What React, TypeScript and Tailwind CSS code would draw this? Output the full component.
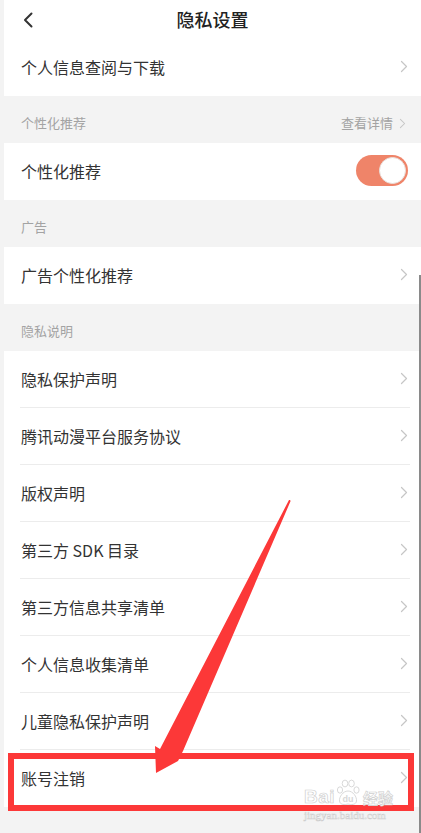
import React from "react";

const font = { fontFamily: '"Noto Sans CJK SC", "Noto Sans", sans-serif' };

function Chevron({ small = false }: { small?: boolean }) {
  return (
    <svg width={small ? 7 : 8} height={small ? 11 : 13} viewBox="0 0 8 13" fill="none">
      <path d="M1.5 1.5 L6.5 6.5 L1.5 11.5" stroke="#c6c6c6" strokeWidth="1.2" strokeLinecap="round" strokeLinejoin="round" />
    </svg>
  );
}

function Row({ label, divider = true, right }: { label: string; divider?: boolean; right?: React.ReactNode }) {
  return (
    <div className="relative h-[57px] flex items-center justify-between pl-[17px] pr-[13px] pb-[2px] bg-white">
      <span className="text-[16px] text-[#333333] leading-none">{label}</span>
      {right ?? <Chevron />}
      {divider && <div className="absolute bottom-0 left-[16px] right-[11px] h-px bg-[#ececec]" />}
    </div>
  );
}

function Section({ label, right }: { label: string; right?: React.ReactNode }) {
  return (
    <div className="h-[47px] pt-[18px] pl-[17px] pr-[15px] flex justify-between items-start">
      <span className="text-[13px] leading-[18px] text-[#a3a3a3]">{label}</span>
      {right}
    </div>
  );
}

export default function App() {
  const privacy = [
    "隐私保护声明",
    "腾讯动漫平台服务协议",
    "版权声明",
    "第三方 SDK 目录",
    "第三方信息共享清单",
    "个人信息收集清单",
    "儿童隐私保护声明",
    "账号注销",
  ];
  const wmStroke = { WebkitTextStroke: "0.7px #cfcfcf" } as React.CSSProperties;
  return (
    <div className="relative w-[421px] h-[833px] overflow-hidden bg-[#f3f3f3]" style={font}>
      <div className="ml-[4px]">
        {/* header */}
        <div className="relative h-[39px] bg-white flex items-center justify-center">
          <svg className="absolute left-[18px] top-[12px]" width="12" height="16" viewBox="0 0 12 16" fill="none">
            <path d="M9.5 1.5 L3 8 L9.5 14.5" stroke="#333" strokeWidth="2" strokeLinecap="round" strokeLinejoin="round" />
          </svg>
          <span className="text-[18px] font-medium text-[#222] leading-none -mt-[1px]">隐私设置</span>
        </div>
        <Row label="个人信息查阅与下载" divider={false} />
        <Section
          label="个性化推荐"
          right={
            <span className="flex items-center gap-[6px] text-[13px] leading-[18px] text-[#a3a3a3]">
              查看详情
              <Chevron small />
            </span>
          }
        />
        <Row
          label="个性化推荐"
          divider={false}
          right={
            <div className="w-[52px] h-[31px] rounded-full bg-[#ef8469] flex items-center justify-end pr-[2px]">
              <div className="w-[27px] h-[27px] rounded-full bg-white border border-[#e8e0dc]" />
            </div>
          }
        />
        <Section label="广告" />
        <Row label="广告个性化推荐" divider={false} />
        <Section label="隐私说明" />
        {privacy.map((p, i) => (
          <Row key={p} label={p} divider={i < privacy.length - 1} />
        ))}
      </div>

      {/* scrollbar */}
      <div className="absolute left-[419px] top-[275px] w-[1.5px] h-[560px] bg-[#8a8a8a]" />

      {/* red box */}
      <div className="absolute left-[8px] top-[753px] w-[406px] h-[58px] border-[6px] border-[#fc3838]" />

      {/* arrow */}
      <svg className="absolute left-0 top-0 pointer-events-none" width="421" height="833" viewBox="0 0 421 833">
        <polygon
          points="290,500 290.6,501 183,751 178,761 156,773 155,746 160,749 289,500"
          fill="#fc3838"
        />
      </svg>

      {/* watermark */}
      <div className="absolute left-[304px] top-[779px] flex flex-col pointer-events-none">
        <div className="flex items-end h-[27px]">
          <span
            className="text-[19px] leading-none font-bold text-white tracking-[0.5px]"
            style={{ fontFamily: '"Liberation Sans", sans-serif', ...wmStroke }}
          >
            Bai
          </span>
          <svg width="24" height="27" viewBox="0 0 24 27" className="mx-[1px]">
            <g fill="white" stroke="#cfcfcf" strokeWidth="0.8">
              <ellipse cx="4" cy="11" rx="2.6" ry="3.2" />
              <ellipse cx="9" cy="4.5" rx="2.8" ry="3.4" />
              <ellipse cx="15.5" cy="4.5" rx="2.8" ry="3.4" />
              <ellipse cx="20.5" cy="11" rx="2.6" ry="3.2" />
              <path d="M12 12 C7 12 3 18 3.5 22 C4 26 9 26 12 25 C15 26 20 26 20.5 22 C21 18 17 12 12 12 Z" />
            </g>
            <text x="12" y="23" textAnchor="middle" fontSize="9" fontWeight="700" fill="#d8d8d8" fontFamily="Liberation Sans, sans-serif">
              du
            </text>
          </svg>
          <span className="text-[15px] leading-none font-bold text-white ml-[2px] mb-[1px]" style={wmStroke}>
            经验
          </span>
        </div>
        <span
          className="text-[11px] text-white leading-none mt-[4px]"
          style={{ fontFamily: '"Liberation Serif", serif', WebkitTextStroke: "0.5px #cccccc" }}
        >
          jingyan.baidu.com
        </span>
      </div>
    </div>
  );
}
